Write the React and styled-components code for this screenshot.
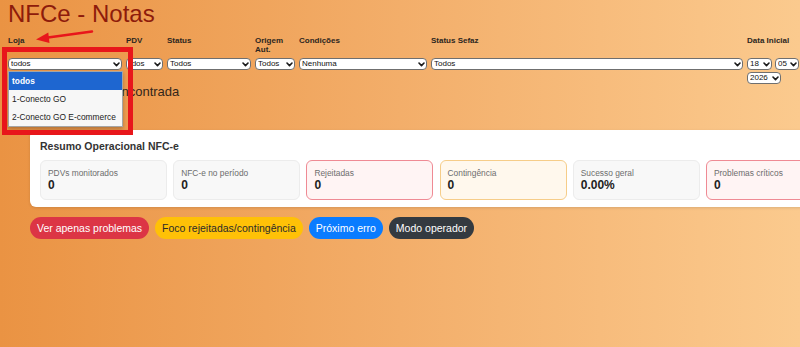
import React from "react";
import styled, { createGlobalStyle } from "styled-components";

const GlobalStyle = createGlobalStyle`
  html, body {
    margin: 0;
    padding: 0;
    height: 100%;
    overflow: hidden;
  }
  body {
    font-family: "Liberation Sans", Arial, sans-serif;
    background: linear-gradient(90deg, #ea9343 0%, #f3ae6a 50%, #fbca8e 100%);
  }
  #root { min-height: 100%; }
`;

const Page = styled.div`
  position: relative;
  padding: 0 0 0 8px;
`;

const Title = styled.h1`
  margin: 0;
  font-size: 24px;
  line-height: 28px;
  font-weight: normal;
  color: #8e1b0b;
`;

const Filters = styled.div`
  display: grid;
  grid-template-columns: 114px 37px 84px 40px 128px 312px 52px;
  column-gap: 4px;
  margin-top: 8px;
  align-items: start;
`;

const Field = styled.div`
  position: relative;
  display: flex;
  flex-direction: column;
  gap: 4px;
`;

const Label = styled.label`
  display: block;
  height: 18px;
  font-size: 8px;
  line-height: 9px;
  font-weight: bold;
  color: #2c2620;
`;

const SelectRow = styled.div`
  display: flex;
  flex-wrap: wrap;
  gap: 2px 3px;
`;

const SelectWrap = styled.div`
  position: relative;
  width: ${(p) => p.$w || "100%"};
  height: 12px;
`;

const Select = styled.select`
  appearance: none;
  -webkit-appearance: none;
  display: block;
  width: 100%;
  height: 12px;
  box-sizing: border-box;
  margin: 0;
  border: 1px solid #6f6f6f;
  border-radius: 4px;
  background: #fff;
  font-family: "Liberation Sans", Arial, sans-serif;
  font-size: 8px;
  line-height: 10px;
  color: #111;
  padding: 0 10px 0 2px;
  text-indent: ${(p) => p.$indent || "0px"};
  outline: none;
`;

const Chevron = styled.svg`
  position: absolute;
  right: 2px;
  top: 3.5px;
  width: 7px;
  height: 5px;
  pointer-events: none;
`;

const Options = styled.ul`
  position: absolute;
  left: 0;
  top: 35px;
  width: 115px;
  box-sizing: border-box;
  margin: 0;
  padding: 0;
  list-style: none;
  background: #f7f7f7;
  border: 1px solid #a5a5a5;
  box-shadow: 0 2px 4px rgba(0, 0, 0, 0.25);
  z-index: 5;
`;

const Option = styled.li`
  height: 18px;
  line-height: 18px;
  padding-left: 3px;
  font-size: 8.4px;
  color: ${(p) => (p.$active ? "#fff" : "#222")};
  background: ${(p) => (p.$active ? "#1e66d0" : "transparent")};
  font-weight: ${(p) => (p.$active ? "bold" : "normal")};
  white-space: nowrap;
`;

const Empty = styled.p`
  margin: 0;
  font-size: 13px;
  line-height: 16px;
  color: #33261a;
`;

const Card = styled.section`
  width: 813px;
  box-sizing: border-box;
  margin: 30px 0 0 22px;
  padding: 10px 10px 7px;
  background: #fff;
  border-radius: 6px;
  box-shadow: 0 1px 3px rgba(0, 0, 0, 0.12);
`;

const CardTitle = styled.h2`
  margin: 0 0 7px;
  font-size: 10.5px;
  line-height: 13px;
  font-weight: bold;
  color: #333;
`;

const Tiles = styled.div`
  display: grid;
  grid-template-columns: repeat(6, 127px);
  column-gap: 6.2px;
`;

const tileColors = {
  neutral: { bg: "#f8f8f8", border: "#ececec" },
  danger: { bg: "#fff4f4", border: "#ef8a94" },
  warning: { bg: "#fff8ed", border: "#f6cd89" },
};

const Tile = styled.div`
  box-sizing: border-box;
  height: 40px;
  padding: 7px 7px;
  border-radius: 6px;
  background: ${(p) => tileColors[p.$tone].bg};
  border: 1px solid ${(p) => tileColors[p.$tone].border};
`;

const TileLabel = styled.div`
  font-size: 8.4px;
  line-height: 10px;
  color: #6d6d6d;
`;

const TileValue = styled.div`
  font-size: 12px;
  line-height: 14px;
  font-weight: bold;
  color: #222;
`;

const Actions = styled.div`
  display: flex;
  gap: 6px;
  margin: 10px 0 0 22px;
`;

const btnColors = {
  red: { bg: "#dc3545", fg: "#fff" },
  yellow: { bg: "#ffc107", fg: "#2b2b2b" },
  blue: { bg: "#0a7cff", fg: "#fff" },
  dark: { bg: "#343a40", fg: "#fff" },
};

const Button = styled.button`
  height: 22px;
  padding: 0 7px;
  border: none;
  border-radius: 11px;
  font-family: "Liberation Sans", Arial, sans-serif;
  font-size: 10.5px;
  background: ${(p) => btnColors[p.$variant].bg};
  color: ${(p) => btnColors[p.$variant].fg};
`;

const RedBox = styled.div`
  position: absolute;
  left: 2px;
  top: 47px;
  width: 131px;
  height: 88px;
  box-sizing: border-box;
  border: 5px solid #e8161b;
  z-index: 6;
  pointer-events: none;
`;

const Arrow = styled.svg`
  position: absolute;
  left: 0;
  top: 0;
  width: 100px;
  height: 50px;
  z-index: 6;
  pointer-events: none;
`;

function Dropdown({ value, options, w, indent }) {
  return (
    <SelectWrap $w={w}>
      <Select defaultValue={value} $indent={indent}>
        {options.map((o) => (
          <option key={o}>{o}</option>
        ))}
      </Select>
      <Chevron viewBox="0 0 7 5">
        <polyline points="1,1 3.5,3.6 6,1" fill="none" stroke="#1a1a1a" strokeWidth="1.6" strokeLinecap="round" strokeLinejoin="round" />
      </Chevron>
    </SelectWrap>
  );
}

const tiles = [
  { label: "PDVs monitorados", value: "0", tone: "neutral" },
  { label: "NFC-e no período", value: "0", tone: "neutral" },
  { label: "Rejeitadas", value: "0", tone: "danger" },
  { label: "Contingência", value: "0", tone: "warning" },
  { label: "Sucesso geral", value: "0.00%", tone: "neutral" },
  { label: "Problemas críticos", value: "0", tone: "danger" },
];

export default function App() {
  return (
    <>
      <GlobalStyle />
      <Page>
        <Title>NFCe - Notas</Title>
        <Filters>
          <Field>
            <Label>Loja</Label>
            <Dropdown value="todos" options={["todos", "1-Conecto GO", "2-Conecto GO E-commerce"]} />
            <Options>
              <Option $active>todos</Option>
              <Option>1-Conecto GO</Option>
              <Option>2-Conecto GO E-commerce</Option>
            </Options>
          </Field>
          <Field>
            <Label>PDV</Label>
            <Dropdown value="todos" options={["todos"]} indent="-4px" />
          </Field>
          <Field>
            <Label>Status</Label>
            <Dropdown value="Todos" options={["Todos"]} />
          </Field>
          <Field>
            <Label>Origem Aut.</Label>
            <Dropdown value="Todos" options={["Todos"]} />
          </Field>
          <Field>
            <Label>Condições</Label>
            <Dropdown value="Nenhuma" options={["Nenhuma"]} />
          </Field>
          <Field>
            <Label>Status Sefaz</Label>
            <Dropdown value="Todos" options={["Todos"]} />
          </Field>
          <Field>
            <Label>Data Inicial</Label>
            <SelectRow>
              <Dropdown value="18" options={["18"]} w="25px" />
              <Dropdown value="05" options={["05"]} w="24px" />
              <Dropdown value="2026" options={["2026"]} w="34px" />
            </SelectRow>
          </Field>
        </Filters>
        <Empty>Nenhuma nota foi encontrada</Empty>

        <Card>
          <CardTitle>Resumo Operacional NFC-e</CardTitle>
          <Tiles>
            {tiles.map((t) => (
              <Tile key={t.label} $tone={t.tone}>
                <TileLabel>{t.label}</TileLabel>
                <TileValue>{t.value}</TileValue>
              </Tile>
            ))}
          </Tiles>
        </Card>

        <Actions>
          <Button $variant="red">Ver apenas problemas</Button>
          <Button $variant="yellow">Foco rejeitadas/contingência</Button>
          <Button $variant="blue">Próximo erro</Button>
          <Button $variant="dark">Modo operador</Button>
        </Actions>

        <RedBox />
        <Arrow viewBox="0 0 100 50">
          <line x1="92" y1="31.5" x2="48" y2="37.5" stroke="#e8161b" strokeWidth="2.5" strokeLinecap="round" />
          <polygon points="36,39.5 49.5,43 48.3,32.5" fill="#e8161b" />
        </Arrow>
      </Page>
    </>
  );
}
